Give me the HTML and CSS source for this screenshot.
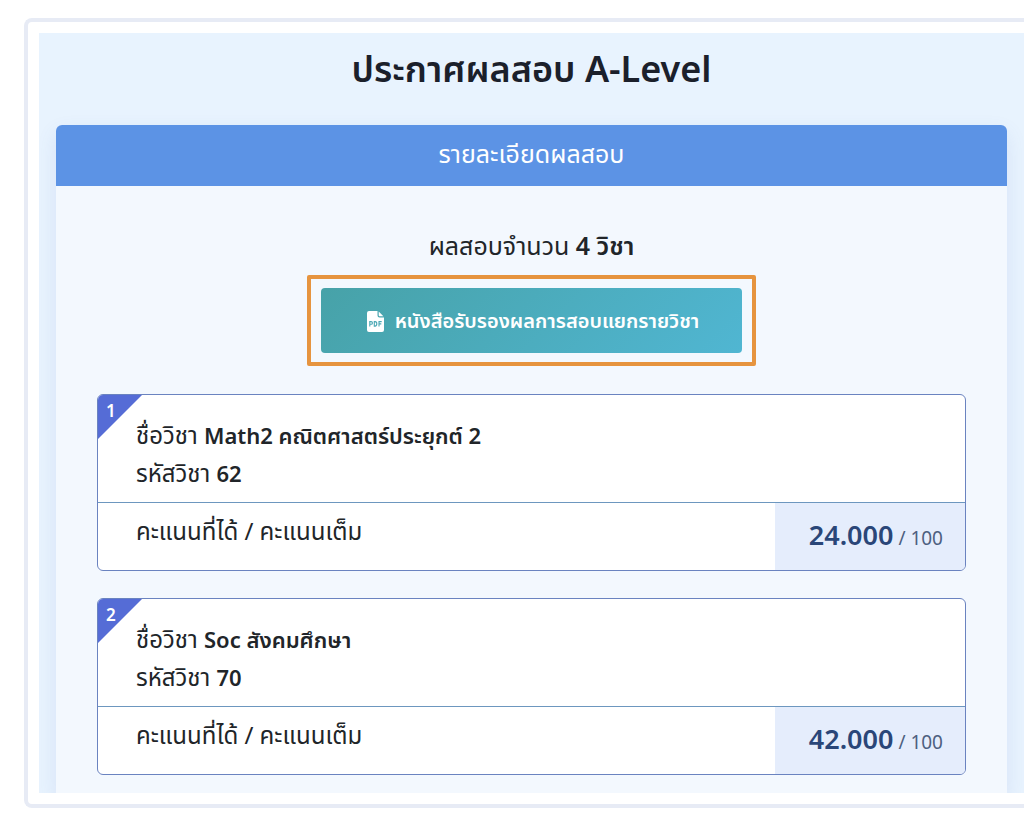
FILE: index.html
```html
<!DOCTYPE html>
<html lang="th">
<head>
    <meta charset="UTF-8">
    <meta name="viewport" content="width=device-width, initial-scale=1.0">
    <title>ประกาศผลสอบ A-Level</title>
    <link rel="stylesheet" href="styles.css">
</head>
<body>
    <div class="frame">
        <main class="page">
            <h1 class="title">ประกาศผลสอบ A-Level</h1>
            <section class="card">
                <h2 class="card-header">รายละเอียดผลสอบ</h2>
                <div class="card-body">
                    <p class="count">ผลสอบจำนวน <b>4 วิชา</b></p>
                    <div class="highlight">
                        <button class="pdf-btn" type="button">
                            <svg class="pdf-icon" viewBox="0 0 17 21" aria-hidden="true">
                                <path fill="#fff" d="M2 0h8.500v4.500a2 2 0 0 0 2 2H17V19a2 2 0 0 1-2 2H2a2 2 0 0 1-2-2V2a2 2 0 0 1 2-2zM11.700 0.600L16.400 5.300h-3.700a1 1 0 0 1-1-1z"/>
                                <path fill="none" stroke="#4aa7b4" stroke-width="1.100" d="M2.800 15.600v-5h1.300a1.300 1.300 0 0 1 0 2.700H2.800M7.300 10.600v4.500h.8q1.700 0 1.700-2.250T8.100 10.600zM12 15.600v-5h2.700M12 12.900h2.300"/>
                            </svg>
                            <span>หนังสือรับรองผลการสอบแยกรายวิชา</span>
                        </button>
                    </div>
                    <div class="subjects">
                        <article class="subject">
                            <span class="number">1</span>
                            <div class="info">
                                <p>ชื่อวิชา <b>Math2 คณิตศาสตร์ประยุกต์ 2</b></p>
                                <p>รหัสวิชา <b>62</b></p>
                            </div>
                            <div class="result">
                                <p class="label">คะแนนที่ได้ / คะแนนเต็ม</p>
                                <p class="score"><b>24.000</b> / 100</p>
                            </div>
                        </article>
                        <article class="subject">
                            <span class="number">2</span>
                            <div class="info">
                                <p>ชื่อวิชา <b>Soc สังคมศึกษา</b></p>
                                <p>รหัสวิชา <b>70</b></p>
                            </div>
                            <div class="result">
                                <p class="label">คะแนนที่ได้ / คะแนนเต็ม</p>
                                <p class="score"><b>42.000</b> / 100</p>
                            </div>
                        </article>
                    </div>
                </div>
            </section>
        </main>
    </div>
</body>
</html>
```
FILE: styles.css
```css
* {
    box-sizing: border-box;
}
body {
    margin: 0;
    padding: 18px 0 13px 24px;
    background: #fff;
    color: #212529;
    font-family: "Noto Sans", "Noto Sans Thai", sans-serif;
    font-size: 24px;
    line-height: 38px;
}
h1, h2, p {
    margin: 0;
}
b {
    font-weight: 600;
}
.frame {
    border: 4px solid #e7ebf5;
    border-right: none;
    border-radius: 8px 0 0 8px;
    padding: 11px 0 11px 11px;
}
.page {
    background: #e8f3fe;
    padding: 0 17px;
    overflow: hidden;
}
.title {
    padding: 12px 0 32px;
    font-size: 36px;
    line-height: 48px;
    font-weight: 600;
    text-align: center;
    color: #1b202b;
}
.card {
    background: #f3f8fe;
    border-radius: 6px 6px 0 0;
    box-shadow: 0 8px 20px rgba(80, 110, 190, 0.12);
}
.card-header {
    padding: 8px 10px 12px;
    background: #5c93e5;
    border-radius: 6px 6px 0 0;
    color: #fff;
    font-size: 25px;
    line-height: 41px;
    font-weight: 400;
    text-align: center;
}
.card-body {
    display: flex;
    flex-direction: column;
    align-items: center;
    padding: 39px 41px 18px;
}
.count {
    font-size: 25px;
    line-height: 40px;
}
.highlight {
    margin: 10px 0 28px;
    padding: 9px 10px;
    border: 4px solid #e6943f;
    border-radius: 2px;
}
.pdf-btn {
    display: flex;
    align-items: center;
    gap: 11px;
    height: 65px;
    padding: 2px 43px 0 46px;
    border: none;
    border-radius: 4px;
    background: linear-gradient(135deg, #47a2a8, #50b6d2);
    color: #fff;
    font-family: inherit;
    font-size: 20px;
    font-weight: 600;
    cursor: pointer;
}
.pdf-icon {
    width: 17px;
    height: 21px;
}
.subjects {
    display: flex;
    flex-direction: column;
    gap: 27px;
    width: 100%;
}
.subject {
    position: relative;
    overflow: hidden;
    background: #fff;
    border: 1px solid #6a83c0;
    border-radius: 6px;
}
/* corner ribbon */
.number {
    position: absolute;
    top: 0;
    left: 0;
    width: 44px;
    height: 44px;
    padding-left: 8px;
    background: #556cd6;
    clip-path: polygon(0 0, 100% 0, 0 100%);
    color: #fff;
    font-size: 17px;
    line-height: 32px;
    font-weight: 600;
}
.info {
    padding: 21px 38px 10px;
    border-bottom: 1px solid #6d97bf;
}
.info p {
    height: 38px;
}
.info b {
    font-size: 22px;
}
.result {
    display: flex;
    height: 67px;
}
.label {
    flex: 1;
    padding: 9px 38px;
}
.score {
    width: 190px;
    padding: 13px 22px 0 0;
    background: #e5edfc;
    color: #4d5f80;
    font-size: 19px;
    text-align: right;
}
.score b {
    color: #2a4678;
    font-size: 27px;
}
```
